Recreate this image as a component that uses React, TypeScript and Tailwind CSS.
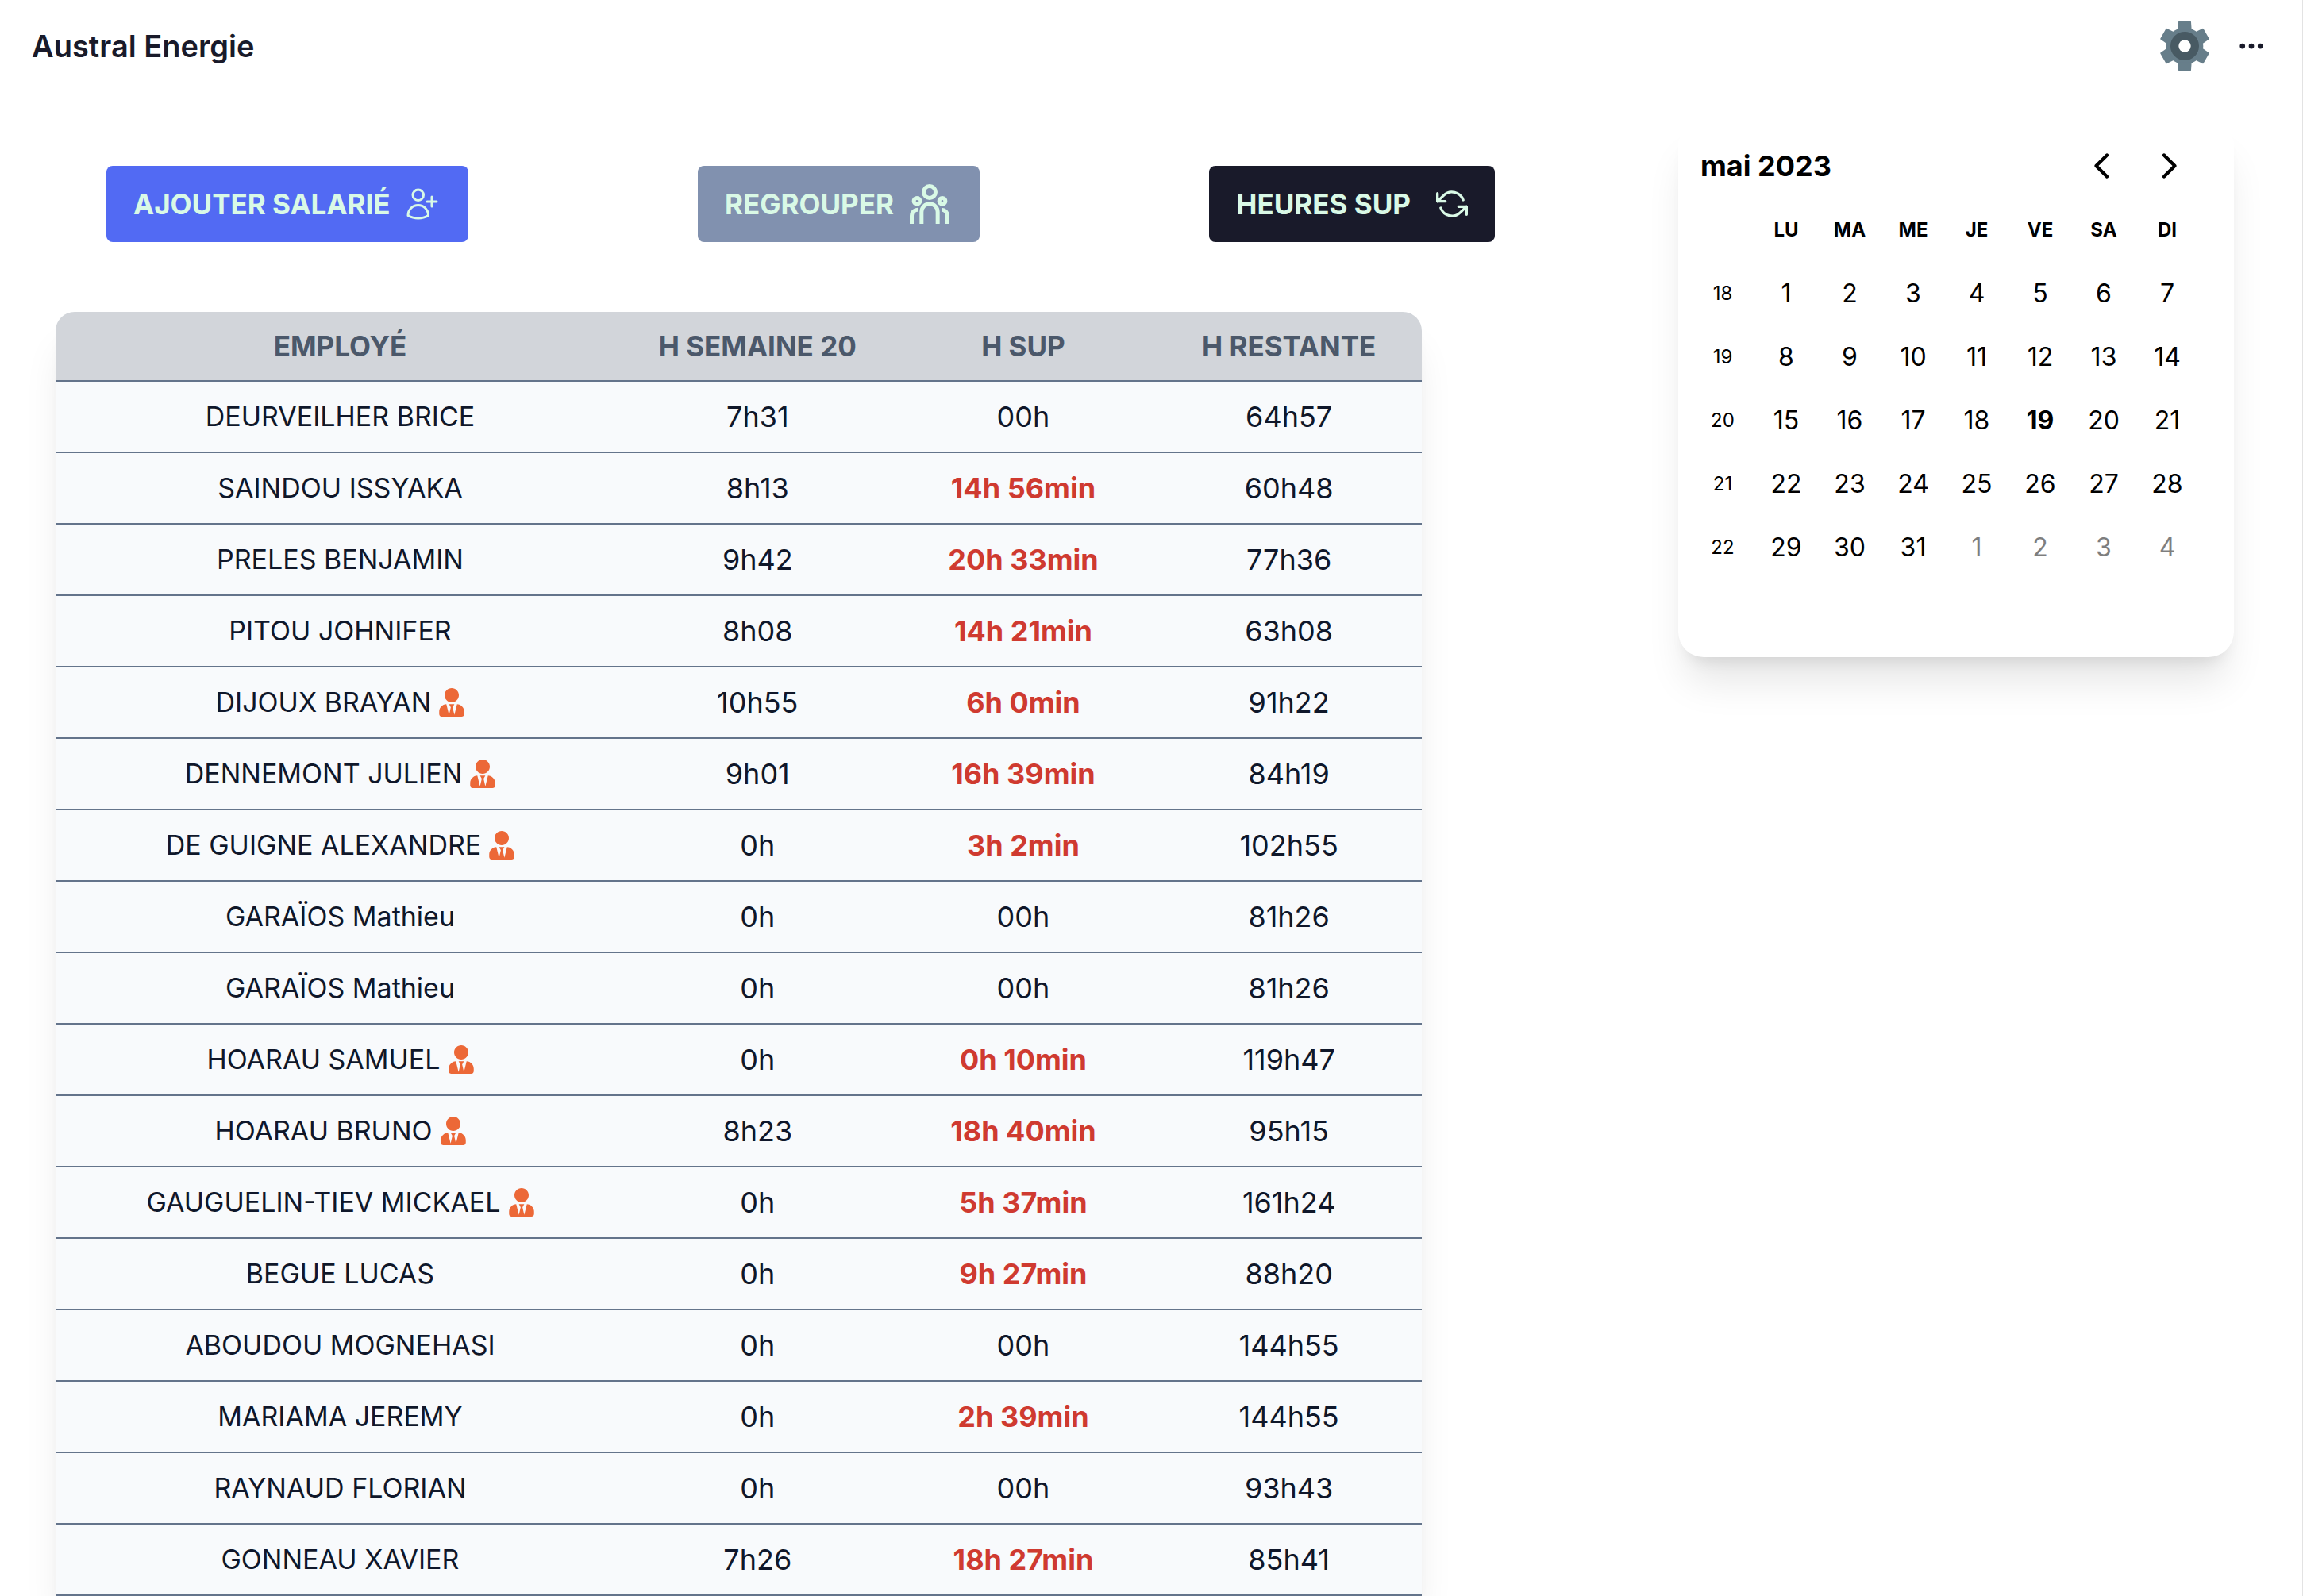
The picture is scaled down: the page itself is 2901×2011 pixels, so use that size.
import React from "react";
import { BsThreeDots } from "react-icons/bs";
import { HiOutlineUserPlus } from "react-icons/hi2";
import { FiRefreshCcw } from "react-icons/fi";
import { FaUserTie } from "react-icons/fa";

type Row = { name: string; tie?: boolean; week: string; sup: string; left: string };

const rows: Row[] = [
  { name: "DEURVEILHER BRICE", week: "7h31", sup: "00h", left: "64h57" },
  { name: "SAINDOU ISSYAKA", week: "8h13", sup: "14h 56min", left: "60h48" },
  { name: "PRELES BENJAMIN", week: "9h42", sup: "20h 33min", left: "77h36" },
  { name: "PITOU JOHNIFER", week: "8h08", sup: "14h 21min", left: "63h08" },
  { name: "DIJOUX BRAYAN", tie: true, week: "10h55", sup: "6h 0min", left: "91h22" },
  { name: "DENNEMONT JULIEN", tie: true, week: "9h01", sup: "16h 39min", left: "84h19" },
  { name: "DE GUIGNE ALEXANDRE", tie: true, week: "0h", sup: "3h 2min", left: "102h55" },
  { name: "GARAÏOS Mathieu", week: "0h", sup: "00h", left: "81h26" },
  { name: "GARAÏOS Mathieu", week: "0h", sup: "00h", left: "81h26" },
  { name: "HOARAU SAMUEL", tie: true, week: "0h", sup: "0h 10min", left: "119h47" },
  { name: "HOARAU BRUNO", tie: true, week: "8h23", sup: "18h 40min", left: "95h15" },
  { name: "GAUGUELIN-TIEV MICKAEL", tie: true, week: "0h", sup: "5h 37min", left: "161h24" },
  { name: "BEGUE LUCAS", week: "0h", sup: "9h 27min", left: "88h20" },
  { name: "ABOUDOU MOGNEHASI", week: "0h", sup: "00h", left: "144h55" },
  { name: "MARIAMA JEREMY", week: "0h", sup: "2h 39min", left: "144h55" },
  { name: "RAYNAUD FLORIAN", week: "0h", sup: "00h", left: "93h43" },
  { name: "GONNEAU XAVIER", week: "7h26", sup: "18h 27min", left: "85h41" },
];

const weekdays = ["LU", "MA", "ME", "JE", "VE", "SA", "DI"];
const weeks = [
  { no: 18, days: [1, 2, 3, 4, 5, 6, 7] },
  { no: 19, days: [8, 9, 10, 11, 12, 13, 14] },
  { no: 20, days: [15, 16, 17, 18, 19, 20, 21] },
  { no: 21, days: [22, 23, 24, 25, 26, 27, 28] },
  { no: 22, days: [29, 30, 31, 1, 2, 3, 4] },
];

const chevron =
  "M69.49 3.343C72.615.219 77.68.219 80.804 3.343c3.058 3.058 3.123 7.975.195 11.112l-.195.202L35.461 60l45.343 45.343c3.058 3.058 3.123 7.975.195 11.112l-.195.202c-3.058 3.058-7.975 3.123-11.112.195l-.202-.195-51-51c-3.058-3.058-3.123-7.975-.195-11.112l.195-.202 51-51Z";

function Chevron({ flip }: { flip?: boolean }) {
  return (
    <svg viewBox="0 0 120 120" className="size-8" fill="currentColor" aria-hidden="true">
      <path d={chevron} transform={flip ? "rotate(180 60 60)" : undefined} />
    </svg>
  );
}

function Gear() {
  return (
    <svg viewBox="0 0 192 192" className="size-16" aria-hidden="true">
      <g fill="#677e8a">
        <circle cx="96" cy="96" r="70" />
        {[0, 60, 120, 180, 240, 300].map((a) => (
          <path key={a} d="M70 34 72 5q0-3 3-3h42q3 0 3 3l2 29Z" transform={`rotate(${a} 96 96)`} />
        ))}
      </g>
      <circle cx="96" cy="96" r="54" fill="#485a63" />
      <circle cx="96" cy="96" r="23" fill="#fff" />
    </svg>
  );
}

function People() {
  return (
    <svg viewBox="0 0 150 150" className="mr-1 size-[50px]" fill="none" stroke="currentColor" strokeWidth="15" aria-hidden="true">
      <circle cx="75" cy="30" r="22.5" />
      <circle cx="27" cy="64" r="11.5" />
      <circle cx="123" cy="64" r="11.5" />
      <path d="M44.5 150v-45a30.5 30.5 0 0 1 61 0v45" />
      <path d="M7.5 150v-31A22.5 22.5 0 0 1 30 96.5" />
      <path d="M142.5 150v-31A22.5 22.5 0 0 0 120 96.5" />
    </svg>
  );
}

function Header() {
  return (
    <header className="flex h-29 items-center justify-between pr-[46px] pl-10">
      <h1 className="text-[38px] font-semibold text-[#191a2a]">Austral Energie</h1>
      <div className="flex items-center gap-[34px]">
        <button type="button" aria-label="Paramètres">
          <Gear />
        </button>
        <button type="button" aria-label="Plus d'options" className="text-[#191a2a]">
          <BsThreeDots className="size-9" />
        </button>
      </div>
    </header>
  );
}

function Toolbar() {
  const base = "flex h-24 items-center rounded-lg px-[34px] text-[35px] font-bold text-[#d9f9e6]";
  return (
    <div className="mr-[-92px] ml-16 flex items-center justify-between">
      <button type="button" className={`${base} gap-4 bg-[#526af3]`}>
        AJOUTER SALARIÉ
        <HiOutlineUserPlus className="size-12" />
      </button>
      <button type="button" className={`${base} gap-5 bg-[#8191af]`}>
        REGROUPER
        <People />
      </button>
      <button type="button" className={`${base} gap-8 bg-[#191a2a]`}>
        HEURES SUP
        <FiRefreshCcw className="size-10" />
      </button>
    </div>
  );
}

function EmployeeTable() {
  return (
    <div className="rounded-t-3xl shadow-[0_40px_50px_-10px_rgba(0,0,0,0.1),0_16px_20px_-12px_rgba(0,0,0,0.1)]">
      <table className="w-full table-fixed border-separate border-spacing-0 overflow-hidden rounded-t-3xl bg-[#f8fafc] text-center text-[36px] leading-14 text-[#0f172a]">
        <thead className="bg-[#d2d5da] text-[35px] text-[#4b586a]">
          <tr className="h-22">
            <th className="w-[41.66%] border-b-2 border-[#64748b] font-bold">EMPLOYÉ</th>
            <th className="border-b-2 border-[#64748b] font-bold">H SEMAINE 20</th>
            <th className="border-b-2 border-[#64748b] font-bold">H SUP</th>
            <th className="border-b-2 border-[#64748b] font-bold">H RESTANTE</th>
          </tr>
        </thead>
        <tbody>
          {rows.map((r, i) => (
            <tr key={i} className="h-[90px]">
              <td className="border-b-2 border-[#64748b] text-[34px]">
                <span className="flex items-center justify-center gap-2.5">
                  {r.name}
                  {r.tie && <FaUserTie className="h-9 w-8 text-[#ec6837]" />}
                </span>
              </td>
              <td className="border-b-2 border-[#64748b]">{r.week}</td>
              <td className="border-b-2 border-[#64748b]">
                {r.sup === "00h" ? r.sup : <strong className="font-bold text-[#cf3a30]">{r.sup}</strong>}
              </td>
              <td className="border-b-2 border-[#64748b]">{r.left}</td>
            </tr>
          ))}
        </tbody>
      </table>
    </div>
  );
}

function Calendar() {
  return (
    <aside className="w-[700px] shrink-0 rounded-[32px] bg-white px-4 pt-4 pb-[98px] text-[32px] text-black shadow-[0_40px_50px_-10px_rgba(0,0,0,0.1),0_16px_20px_-12px_rgba(0,0,0,0.1)]">
      <div className="w-[640px]">
        <div className="flex h-[82px] items-center justify-between pl-3">
          <h2 className="text-[36px] font-bold">mai 2023</h2>
          <div className="flex">
            <button type="button" aria-label="Mois précédent" className="flex size-20 items-center justify-center">
              <Chevron />
            </button>
            <button type="button" aria-label="Mois suivant" className="flex size-20 items-center justify-center">
              <Chevron flip />
            </button>
          </div>
        </div>
        <table className="w-full table-fixed text-center">
          <thead>
            <tr className="h-20 text-2xl">
              <td />
              {weekdays.map((d) => (
                <th key={d} className="font-bold">{d}</th>
              ))}
            </tr>
          </thead>
          <tbody>
            {weeks.map((w) => (
              <tr key={w.no} className="h-20">
                <th className="text-2xl font-normal">{w.no}</th>
                {w.days.map((d) => {
                  const outside = w.no === 22 && d < 5;
                  const tone = outside ? "opacity-50" : d === 19 ? "font-bold" : "";
                  return (
                    <td key={d} className="p-0">
                      <button type="button" className={`size-20 align-middle ${tone}`}>{d}</button>
                    </td>
                  );
                })}
              </tr>
            ))}
          </tbody>
        </table>
      </div>
    </aside>
  );
}

export default function App() {
  return (
    <div className="h-screen overflow-hidden border-r border-[#e3e3e3] bg-white font-[Inter,sans-serif]">
      <Header />
      <main className="flex items-start pr-[86px] pl-[70px]">
        <section className="mr-[323px] flex min-w-0 flex-1 flex-col gap-22 pt-[93px]">
          <Toolbar />
          <EmployeeTable />
        </section>
        <div className="pt-9">
          <Calendar />
        </div>
      </main>
    </div>
  );
}
